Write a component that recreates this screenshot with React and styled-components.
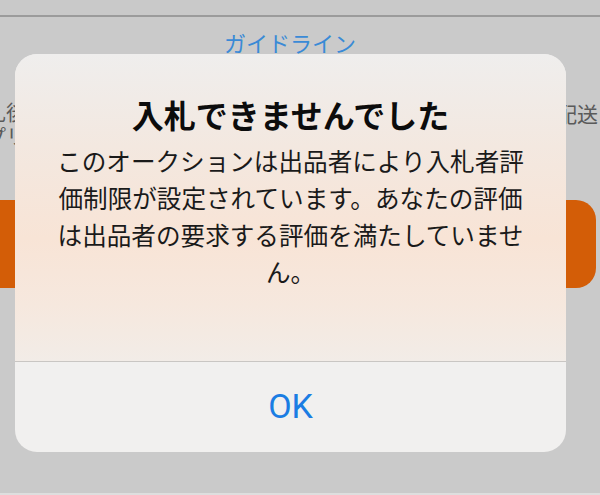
import styled, { createGlobalStyle } from 'styled-components';

const GlobalStyle = createGlobalStyle`
  html, body {
    margin: 0;
    padding: 0;
    background: #cacaca;
  }
`;

function App() {
  return (
    <Page>
      <GlobalStyle />
      <TopBar />
      <Backdrop>
        <GuideLink>ガイドライン</GuideLink>
        <InfoRow>
          <InfoText side="left">入札後<br />アプリ</InfoText>
          <InfoText side="right">配送</InfoText>
        </InfoRow>
        <BidButton />
      </Backdrop>

      <Alert role="alertdialog">
        <AlertBody>
          <AlertTitle>入札できませんでした</AlertTitle>
          <AlertMessage>
            このオークションは出品者により入札者評価制限が設定されています。あなたの評価は出品者の要求する評価を満たしていません。
          </AlertMessage>
        </AlertBody>
        <AlertAction type="button">OK</AlertAction>
      </Alert>
    </Page>
  );
}

const Page = styled.div`
  position: relative;
  width: 600px;
  height: 495px;
  overflow: hidden;
  background: #cacaca;
  border-bottom: 2px solid #dedede;
  box-sizing: border-box;
  font-family: "Noto Sans CJK JP", "Noto Sans", sans-serif;
`;

const TopBar = styled.div`
  height: 15px;
  background: #c9c9c9;
  border-bottom: 2px solid #9b9b9b;
`;

const Backdrop = styled.div`
  display: flex;
  flex-direction: column;
`;

const GuideLink = styled.div`
  margin: 12px 20px 0 0;
  text-align: center;
  color: #3a8ad6;
  font-size: 22px;
  line-height: 26px;
`;

const InfoRow = styled.div`
  display: flex;
  justify-content: space-between;
  margin-top: 44px;
  height: 60px;
`;

const InfoText = styled.div`
  color: #5a5a5a;
  font-size: 21px;
  line-height: 24px;
  margin-left: ${p => (p.side === 'left' ? '-36px' : '0')};
  margin-right: ${p => (p.side === 'right' ? '2px' : '0')};
  margin-top: ${p => (p.side === 'right' ? '2px' : '0')};
`;

const BidButton = styled.div`
  margin: 41px 4px 0 -30px;
  height: 88px;
  border-radius: 20px;
  background: #d35d07;
`;

const Alert = styled.div`
  position: absolute;
  left: 15px;
  top: 54px;
  width: 551px;
  height: 398px;
  border-radius: 22px;
  overflow: hidden;
  display: flex;
  flex-direction: column;
  background: #f1f0ef;
`;

const AlertBody = styled.div`
  height: 308px;
  box-sizing: border-box;
  padding-top: 40px;
  display: flex;
  flex-direction: column;
  align-items: center;
  border-bottom: 1px solid #c9c6c3;
  background: linear-gradient(
    180deg,
    #efeeed 0%,
    #f3e8e0 30%,
    #f8e4d6 60%,
    #f6e8de 82%,
    #f2ece7 100%
  );
`;

const AlertTitle = styled.h2`
  margin: 0;
  font-size: 32px;
  line-height: 40px;
  font-weight: 700;
  color: #0c0c0c;
`;

const AlertMessage = styled.p`
  margin: 8px 0 0;
  width: 19em;
  font-size: 24.6px;
  line-height: 37px;
  text-align: center;
  color: #1a1a1a;
  line-break: strict;
`;

const AlertAction = styled.button`
  flex: 1;
  border: none;
  background: transparent;
  color: #1b7de3;
  font-family: Roboto, "Liberation Sans", sans-serif;
  font-size: 34px;
  padding: 0 0 2px;
  cursor: pointer;
`;

export default App;
